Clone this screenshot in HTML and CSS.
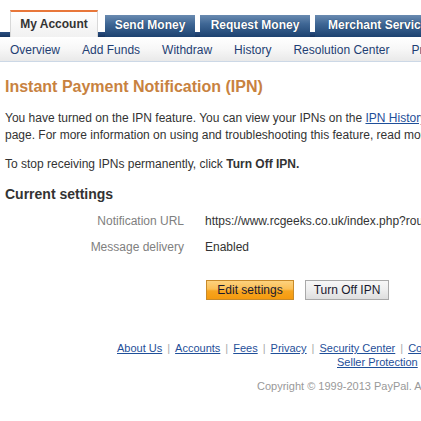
FILE: index.html
```html
<!DOCTYPE html>
<html>
<head>
<meta charset="utf-8">
<link rel="stylesheet" href="styles.css">
</head>
<body>
<div class="page">
  <div class="tabs">
    <div class="tab active">My Account</div>
    <div class="tab t-send">Send Money</div>
    <div class="tab t-req">Request Money</div>
    <div class="tab t-merch">Merchant Services</div>
  </div>
  <div class="subnav">
    <a>Overview</a>
    <a>Add Funds</a>
    <a>Withdraw</a>
    <a>History</a>
    <a>Resolution Center</a>
    <a>Profile</a>
  </div>
  <div class="content">
    <h1 class="title">Instant Payment Notification (IPN)</h1>
    <p class="para">You have turned on the IPN feature. You can view your IPNs on the <a class="link">IPN History</a><br>page. For more information on using and troubleshooting this feature, read more about IPN.</p>
    <p class="para stop">To stop receiving IPNs permanently, click <b>Turn Off IPN.</b></p>
    <h2 class="subtitle">Current settings</h2>
    <div class="settings">
      <div class="row"><span class="label">Notification URL</span><span class="value">https://www.rcgeeks.co.uk/index.php?route=payment/pp_standard/callback</span></div>
      <div class="row"><span class="label">Message delivery</span><span class="value">Enabled</span></div>
    </div>
    <div class="buttons">
      <button class="btn primary">Edit settings</button>
      <button class="btn secondary">Turn Off IPN</button>
    </div>
  </div>
  <div class="footer">
    <div class="links"><a>About Us</a><span class="sep">|</span><a>Accounts</a><span class="sep">|</span><a>Fees</a><span class="sep">|</span><a>Privacy</a><span class="sep">|</span><a>Security Center</a><span class="sep">|</span><a>Contact Us</a><span class="sep">|</span><a>Legal Agreements</a></div>
    <div class="links second"><a>Seller Protection</a></div>
    <div class="copy">Copyright © 1999-2013 PayPal. All rights reserved.</div>
  </div>
</div>
</body>
</html>
```

FILE: styles.css
```css
html, body {
  margin: 0;
  padding: 0;
  background: #fff;
  overflow: hidden;
}
body {
  font-family: "Liberation Sans", Arial, sans-serif;
  font-size: 12px;
  color: #333;
  width: 421px;
  height: 421px;
}
.page {
  width: 421px;
  overflow: hidden;
}
.tabs {
  display: flex;
  align-items: flex-end;
  height: 37px;
  padding-left: 10px;
  background: linear-gradient(to bottom, #fff 0, #fff 32px, #2a4e80 32px, #173661 37px);
  white-space: nowrap;
}
.tab {
  flex: none;
  font-weight: bold;
  font-size: 12px;
  text-align: center;
  box-sizing: border-box;
}
.tab.active {
  width: 88px;
  height: 27px;
  line-height: 25px;
  color: #333;
  background: linear-gradient(to bottom, #ffffff, #f1f1f1);
  border-top: 2px solid #e8773a;
  border-left: 1px solid #d8d8d8;
  border-right: 1px solid #d8d8d8;
  margin-right: 7px;
}
.tab.t-send, .tab.t-req, .tab.t-merch {
  height: 22px;
  line-height: 21px;
  color: #fff;
  text-shadow: 0 0 1px #0c2547;
  background: linear-gradient(to bottom, #6a8bb1 0, #3f6795 40%, #1d4270 100%);
  margin-right: 5px;
}
.t-send { width: 90px; }
.t-req { width: 110px; }
.t-merch { width: 130px; text-align: left !important; padding-left: 13px; }
.subnav {
  display: flex;
  gap: 22px;
  height: 25px;
  align-items: center;
  padding-left: 10px;
  background: linear-gradient(to bottom, #ffffff 0, #f7f7f7 50%, #e9e9e9 100%);
  border-bottom: 1px solid #ccd8e6;
  box-sizing: border-box;
  white-space: nowrap;
}
.subnav a {
  flex: none;
  color: #1f3e73;
  font-size: 12px;
  padding-top: 2px;
}
.content {
  padding: 0 5px;
  white-space: nowrap;
}
.title {
  margin: 15px 0 0;
  font-size: 16px;
  font-weight: bold;
  color: #c8823f;
  line-height: 20px;
}
.para {
  margin: 13px 0 0;
  line-height: 17px;
  color: #333;
}
.para.stop {
  margin-top: 12px;
}
.link {
  color: #1f4f99;
  text-decoration: underline;
}
.subtitle {
  margin: 12px 0 0;
  font-size: 14px;
  font-weight: bold;
  color: #333;
  line-height: 18px;
}
.settings {
  margin-top: 5px;
}
.row {
  display: flex;
  align-items: center;
  height: 26px;
}
.label {
  flex: none;
  width: 179px;
  text-align: right;
  color: #808080;
}
.value {
  flex: none;
  margin-left: 21px;
  color: #333;
}
.buttons {
  display: flex;
  gap: 11px;
  padding-left: 201px;
  margin-top: 20px;
}
.btn {
  font-family: "Liberation Sans", Arial, sans-serif;
  font-size: 12px;
  height: 20px;
  padding: 0;
  color: #1a1a2e;
  box-sizing: border-box;
  cursor: pointer;
}
.btn.primary {
  width: 88px;
  border: 1px solid #c88a2a;
  background: linear-gradient(to bottom, #fdd27e 0, #fbbf56 45%, #f7a51f 55%, #f59a0f 100%);
}
.btn.secondary {
  width: 84px;
  border: 1px solid #a9a9a9;
  background: linear-gradient(to bottom, #f7f7f7 0, #eeeeee 50%, #dedede 100%);
}
.footer {
  margin-top: 41px;
  white-space: nowrap;
  font-size: 11px;
}
.links {
  padding-left: 117px;
  line-height: 14px;
}
.links a {
  color: #1f4f99;
  text-decoration: underline;
}
.sep {
  color: #aaa;
  margin: 0 5px;
}
.links.second {
  padding-left: 337px;
}
.copy {
  padding-left: 257px;
  margin-top: 11px;
  color: #999;
}
```
